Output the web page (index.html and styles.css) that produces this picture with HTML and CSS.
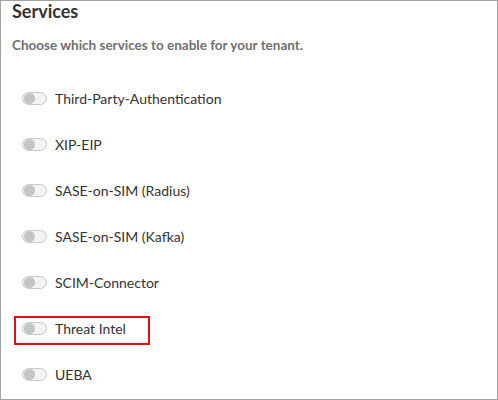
FILE: index.html
```html
<!DOCTYPE html>
<html>
<head>
<meta charset="utf-8">
<link rel="stylesheet" href="styles.css">
</head>
<body>
<div class="panel">
  <h2 class="title">Services</h2>
  <p class="subtitle">Choose which services to enable for your tenant.</p>
  <ul class="list">
    <li class="item"><span class="toggle"><span class="thumb"></span></span><span class="label">Third-Party-Authentication</span></li>
    <li class="item"><span class="toggle"><span class="thumb"></span></span><span class="label">XIP-EIP</span></li>
    <li class="item"><span class="toggle"><span class="thumb"></span></span><span class="label">SASE-on-SIM (Radius)</span></li>
    <li class="item"><span class="toggle"><span class="thumb"></span></span><span class="label">SASE-on-SIM (Kafka)</span></li>
    <li class="item"><span class="toggle"><span class="thumb"></span></span><span class="label">SCIM-Connector</span></li>
    <li class="item highlight"><span class="toggle"><span class="thumb"></span></span><span class="label">Threat Intel</span></li>
    <li class="item"><span class="toggle"><span class="thumb"></span></span><span class="label">UEBA</span></li>
  </ul>
</div>
</body>
</html>
```

FILE: styles.css
```css
html, body {
  margin: 0;
  padding: 0;
  background: #fff;
}
.panel {
  box-sizing: border-box;
  width: 498px;
  height: 400px;
  border: 1px solid #a3a3a3;
  padding: 0 0 0 11px;
  font-family: Lato, "Open Sans", sans-serif;
  overflow: hidden;
}
.title {
  margin: 0;
  font-size: 18px;
  font-weight: 700;
  color: #333;
  line-height: 20px;
}
.subtitle {
  margin: 16px 0 0 0;
  font-size: 13.5px;
  font-weight: 700;
  color: #707070;
  line-height: 16px;
}
.list {
  list-style: none;
  margin: 37px 0 0 0;
  padding: 0;
  display: flex;
  flex-direction: column;
  gap: 29px;
}
.item {
  display: flex;
  align-items: center;
  height: 17px;
  padding-left: 10px;
  gap: 8px;
}
.toggle {
  box-sizing: border-box;
  width: 25px;
  height: 13px;
  border: 1px solid #c8c8c8;
  border-radius: 7px;
  background: #f3f3f3;
  display: flex;
  align-items: center;
  padding-left: 1px;
}
.thumb {
  width: 11px;
  height: 11px;
  border-radius: 50%;
  background: #c4c4c4;
}
.label {
  font-size: 14px;
  color: #333;
  line-height: 17px;
}
.highlight {
  outline: 2px solid #e60f0f;
  outline-offset: 0;
  width: max-content;
  margin: -2px 0 -6px 4px;
  padding: 2px 22px 6px 6px;
}
```
